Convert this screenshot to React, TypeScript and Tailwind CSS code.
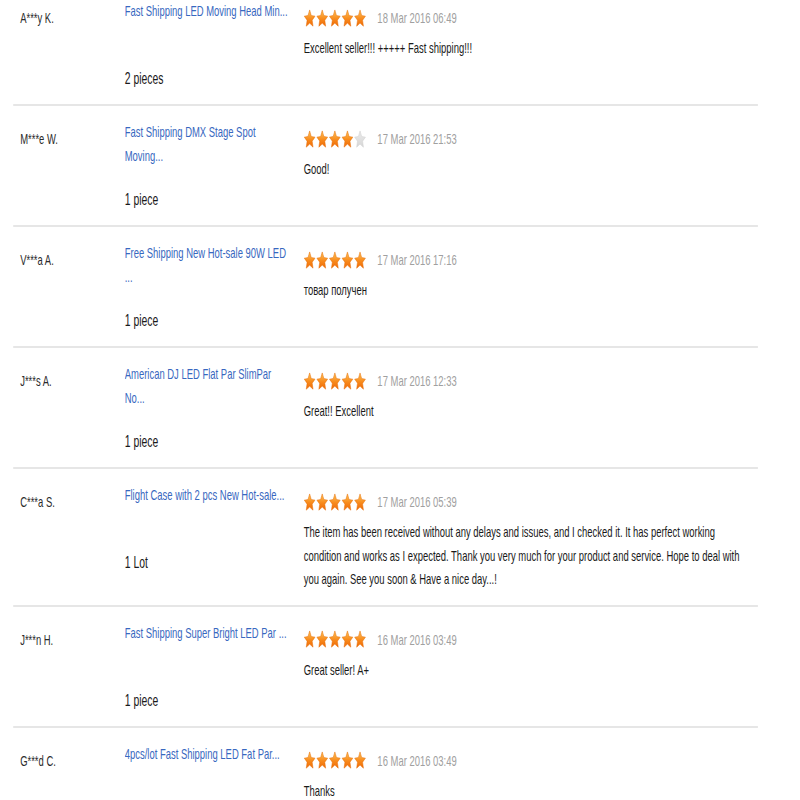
import React, { useId } from "react";

type Review = {
  name: string;
  product: string;
  qty: string;
  stars: number;
  date: string;
  text: string;
};

const reviews: Review[] = [
  { name: "A***y K.", product: "Fast Shipping LED Moving Head Min...", qty: "2 pieces", stars: 5, date: "18 Mar 2016 06:49", text: "Excellent seller!!! +++++ Fast shipping!!!" },
  { name: "M***e W.", product: "Fast Shipping DMX Stage Spot Moving...", qty: "1 piece", stars: 4, date: "17 Mar 2016 21:53", text: "Good!" },
  { name: "V***a A.", product: "Free Shipping New Hot-sale 90W LED ...", qty: "1 piece", stars: 5, date: "17 Mar 2016 17:16", text: "товар получен" },
  { name: "J***s A.", product: "American DJ LED Flat Par SlimPar No...", qty: "1 piece", stars: 5, date: "17 Mar 2016 12:33", text: "Great!! Excellent" },
  { name: "C***a S.", product: "Flight Case with 2 pcs New Hot-sale...", qty: "1 Lot", stars: 5, date: "17 Mar 2016 05:39", text: "The item has been received without any delays and issues, and I checked it. It has perfect working condition and works as I expected. Thank you very much for your product and service. Hope to deal with you again. See you soon & Have a nice day...!" },
  { name: "J***n H.", product: "Fast Shipping Super Bright LED Par ...", qty: "1 piece", stars: 5, date: "16 Mar 2016 03:49", text: "Great seller! A+" },
  { name: "G***d C.", product: "4pcs/lot Fast Shipping LED Fat Par...", qty: "1 piece", stars: 5, date: "16 Mar 2016 03:49", text: "Thanks" },
];

function Star({ filled }: { filled: boolean }) {
  const id = useId().replace(/:/g, "");
  return (
    <svg width="19" height="19" viewBox="0 0 24 24" preserveAspectRatio="none" className="block">
      <defs>
        <linearGradient id={`g${id}`} x1="0" y1="0" x2="0" y2="1">
          {filled ? (
            <>
              <stop offset="0%" stopColor="#ffc658" />
              <stop offset="55%" stopColor="#f88a1c" />
              <stop offset="100%" stopColor="#ef6a08" />
            </>
          ) : (
            <>
              <stop offset="0%" stopColor="#ececec" />
              <stop offset="100%" stopColor="#d6d6d6" />
            </>
          )}
        </linearGradient>
      </defs>
      <path
        d="M12 1.2l3.2 7 7.6.8-5.7 5.1 1.7 7.6L12 17.8l-6.8 3.9 1.7-7.6L1.2 9l7.6-.8z"
        fill={`url(#g${id})`}
        stroke={filled ? "#e8700c" : "#d0d0d0"}
        strokeWidth="0.8"
        strokeLinejoin="round"
      />
    </svg>
  );
}

function Row({ r, first }: { r: Review; first: boolean }) {
  return (
    <div className={`flex border-b-2 border-[#e6e6e6] pt-[14px] pb-[14px] ${first ? "mt-[-15px]" : ""}`}>
      <div className="w-[177px] shrink-0 pl-[11px] pt-[7px] text-[15px] leading-[24px] text-[#2a2a2a]">
        {r.name}
      </div>
      <div className="w-[268px] shrink-0">
        <div className="h-[48px] overflow-hidden text-[15px] leading-[24px] text-[#3868c0]">{r.product}</div>
        <div className="mt-[19px] text-[16.5px] leading-[24px] text-[#1a1a1a]">{r.qty}</div>
      </div>
      <div className="ml-[16px] w-[702px] shrink-0">
        <div className="mt-[7px] flex h-[24px] items-center">
          <div className="flex gap-[1px]">
            {[0, 1, 2, 3, 4].map((i) => (
              <Star key={i} filled={i < r.stars} />
            ))}
          </div>
          <span className="ml-[18px] text-[15px] leading-[24px] text-[#a0a0a0]">{r.date}</span>
        </div>
        <div className="mt-[6px] text-[15px] leading-[23.5px] text-[#1a1a1a]">{r.text}</div>
      </div>
    </div>
  );
}

export default function App() {
  return (
    <div className="h-[800px] w-[800px] overflow-hidden bg-white" style={{ fontFamily: '"Liberation Sans", Arial, sans-serif' }}>
      <div className="w-[1270px] origin-top-left scale-x-[0.63]">
        <div className="ml-[21px] w-[1182px]">
          {reviews.map((r, i) => (
            <Row key={i} r={r} first={i === 0} />
          ))}
        </div>
      </div>
    </div>
  );
}
